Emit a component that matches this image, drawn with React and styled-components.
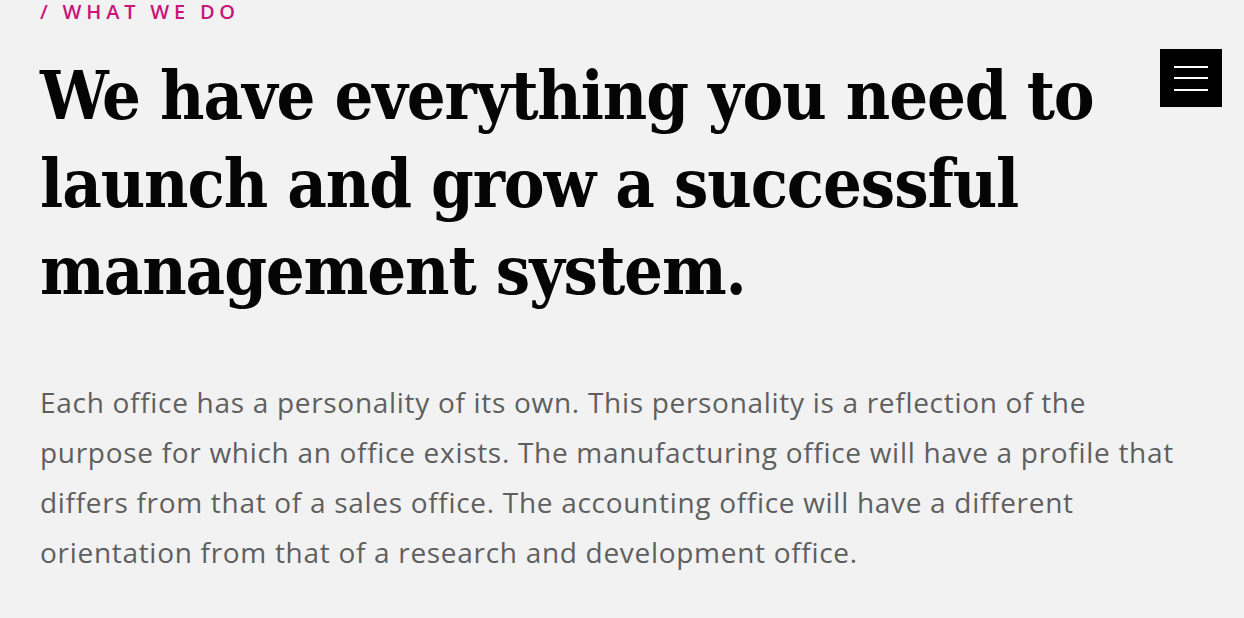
import styled, { createGlobalStyle } from "styled-components";

const GlobalStyle = createGlobalStyle`
  html, body {
    margin: 0;
    padding: 0;
    background: #f2f2f2;
  }
`;

const Page = styled.main`
  width: 1244px;
  height: 618px;
  padding: 0 40px;
  box-sizing: border-box;
  overflow: hidden;
  background: #f2f2f2;
`;

const Content = styled.section`
  display: flex;
  flex-direction: column;
  max-width: 1150px;
`;

const Eyebrow = styled.p`
  margin: 0;
  font-family: "Open Sans", "Liberation Sans", sans-serif;
  font-weight: 600;
  font-size: 20px;
  line-height: 24px;
  letter-spacing: 4.8px;
  color: #c8157a;
  text-transform: uppercase;
`;

const Heading = styled.h1`
  margin: 28px 0 0;
  max-width: 1100px;
  font-family: "DejaVu Serif", "Liberation Serif", serif;
  font-stretch: condensed;
  font-weight: 700;
  font-size: 68px;
  line-height: 87.5px;
  letter-spacing: -1.1px;
  color: #050505;
`;

const Body = styled.p`
  margin: 62px 0 0;
  font-family: "Open Sans", "Liberation Sans", sans-serif;
  font-weight: 400;
  font-size: 28px;
  line-height: 50px;
  letter-spacing: 0.7px;
  color: #5f5f5f;
`;

/* fixed site menu toggle, sits over the page */
const MenuButton = styled.button`
  position: fixed;
  top: 49px;
  right: 22px;
  display: flex;
  flex-direction: column;
  justify-content: center;
  align-items: center;
  gap: 9.5px;
  width: 62px;
  height: 58px;
  padding: 0;
  border: none;
  background: #000;
  cursor: pointer;
`;

const Bar = styled.span`
  display: block;
  width: 34px;
  height: 2px;
  background: #fff;
`;

export default function App() {
  return (
    <>
      <GlobalStyle />
      <Page>
        <Content>
          <Eyebrow>/ What we do</Eyebrow>
          <Heading>
            We have everything you need to launch and grow a successful management system.
          </Heading>
          <Body>
            Each office has a personality of its own. This personality is a reflection of the
            purpose for which an office exists. The manufacturing office will have a profile that
            differs from that of a sales office. The accounting office will have a different
            orientation from that of a research and development office.
          </Body>
        </Content>
      </Page>
      <MenuButton aria-label="Open menu">
        <Bar />
        <Bar />
        <Bar />
      </MenuButton>
    </>
  );
}
